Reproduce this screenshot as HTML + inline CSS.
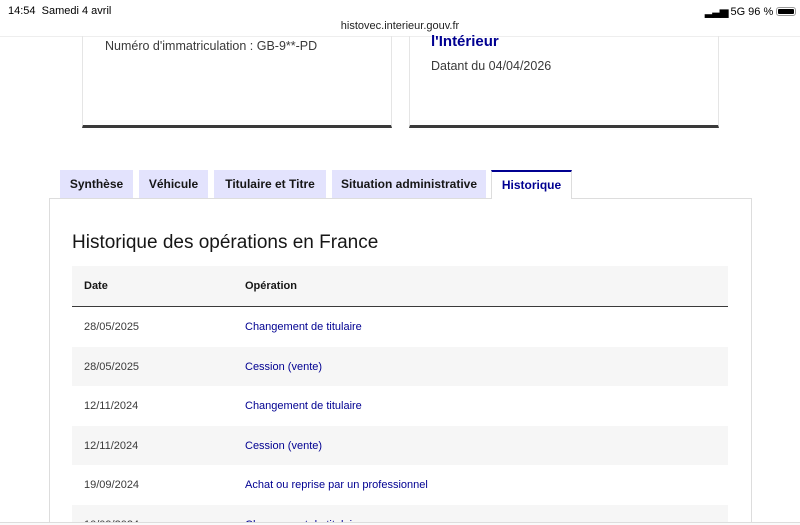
<!DOCTYPE html>
<html style="width:800px;height:525px;overflow:hidden"><head><meta charset="utf-8"><style>
*{box-sizing:border-box;margin:0;padding:0}
body{width:800px;height:525px;overflow:hidden;background:#fff;font-family:"Liberation Sans",sans-serif;position:relative;color:#3a3a3a}
.abs{position:absolute}
.card{position:absolute;top:36px;height:92px;border-left:1px solid #e5e5e5;border-right:1px solid #e5e5e5;border-bottom:3px solid #3a3a3a}
.tab{position:absolute;top:170px;height:28px;background:#e3e3fd;font-size:12px;font-weight:bold;color:#161616;text-align:center;line-height:29px}
.row{position:absolute;left:72px;width:656px;height:39.5px;font-size:11px}
.row span{position:absolute;top:14px}
.d{left:12px;color:#3a3a3a}.o{left:173px;color:#000091}
.g{background:#f6f6f6}
</style></head><body>
<div class="abs" style="left:0;top:0;width:800px;height:37px;background:#fff;border-bottom:1px solid #eee"></div>
<div class="abs" style="left:8px;top:5px;font-size:11px;color:#000">14:54&nbsp; Samedi 4 avril</div>
<div class="abs" style="left:705px;top:5px;font-size:11px;color:#000"><span style="font-weight:bold;letter-spacing:-1px">▂▃▅</span> 5G 96 % <span style="display:inline-block;width:20px;height:9px;border:1px solid #999;border-radius:3px;vertical-align:-1px;padding:1px"><span style="display:block;width:100%;height:100%;background:#000;border-radius:1px"></span></span></div>
<div class="abs" style="left:0;width:800px;top:20px;text-align:center;font-size:11px;color:#222">histovec.interieur.gouv.fr</div>
<div class="card" style="left:82px;width:310px"></div>
<div class="card" style="left:409px;width:310px"></div>
<div class="abs" style="left:105px;top:39px;font-size:12.5px">Numéro d'immatriculation : GB-9**-PD</div>
<div class="abs" style="left:431px;top:33px;font-size:15px;font-weight:bold;color:#000091">l'Intérieur</div>
<div class="abs" style="left:431px;top:59px;font-size:12.5px">Datant du 04/04/2026</div>
<div class="abs" style="left:49px;top:198px;width:703px;height:327px;border:1px solid #ddd;border-bottom:none"></div>
<div class="tab" style="left:60px;width:73px">Synthèse</div>
<div class="tab" style="left:139px;width:69px">Véhicule</div>
<div class="tab" style="left:214px;width:112px">Titulaire et Titre</div>
<div class="tab" style="left:332px;width:154px">Situation administrative</div>
<div class="tab" style="left:491px;width:81px;background:#fff;border-top:2px solid #000091;border-left:1px solid #ddd;border-right:1px solid #ddd;height:29px;color:#000091;line-height:27px">Historique</div>
<div class="abs" style="left:72px;top:232px;font-size:19px;color:#161616">Historique des opérations en France</div>
<div class="row g" style="top:266px;height:41px;border-bottom:1px solid #3a3a3a;font-weight:bold;color:#161616"><span class="d" style="top:14px;color:#161616">Date</span><span style="left:173px;top:14px">Opération</span></div>
<div class="row" style="top:307px"><span class="d">28/05/2025</span><span class="o">Changement de titulaire</span></div>
<div class="row g" style="top:346.5px"><span class="d">28/05/2025</span><span class="o">Cession (vente)</span></div>
<div class="row" style="top:386px"><span class="d">12/11/2024</span><span class="o">Changement de titulaire</span></div>
<div class="row g" style="top:425.5px"><span class="d">12/11/2024</span><span class="o">Cession (vente)</span></div>
<div class="row" style="top:465px"><span class="d">19/09/2024</span><span class="o">Achat ou reprise par un professionnel</span></div>
<div class="row g" style="top:504.5px;height:20.5px;overflow:hidden"><span class="d">10/09/2024</span><span class="o">Changement de titulaire</span></div>
<div class="abs" style="left:0;top:522px;width:800px;height:3px;background:#fafafa;border-top:1px solid #ddd"></div>
</body></html>
